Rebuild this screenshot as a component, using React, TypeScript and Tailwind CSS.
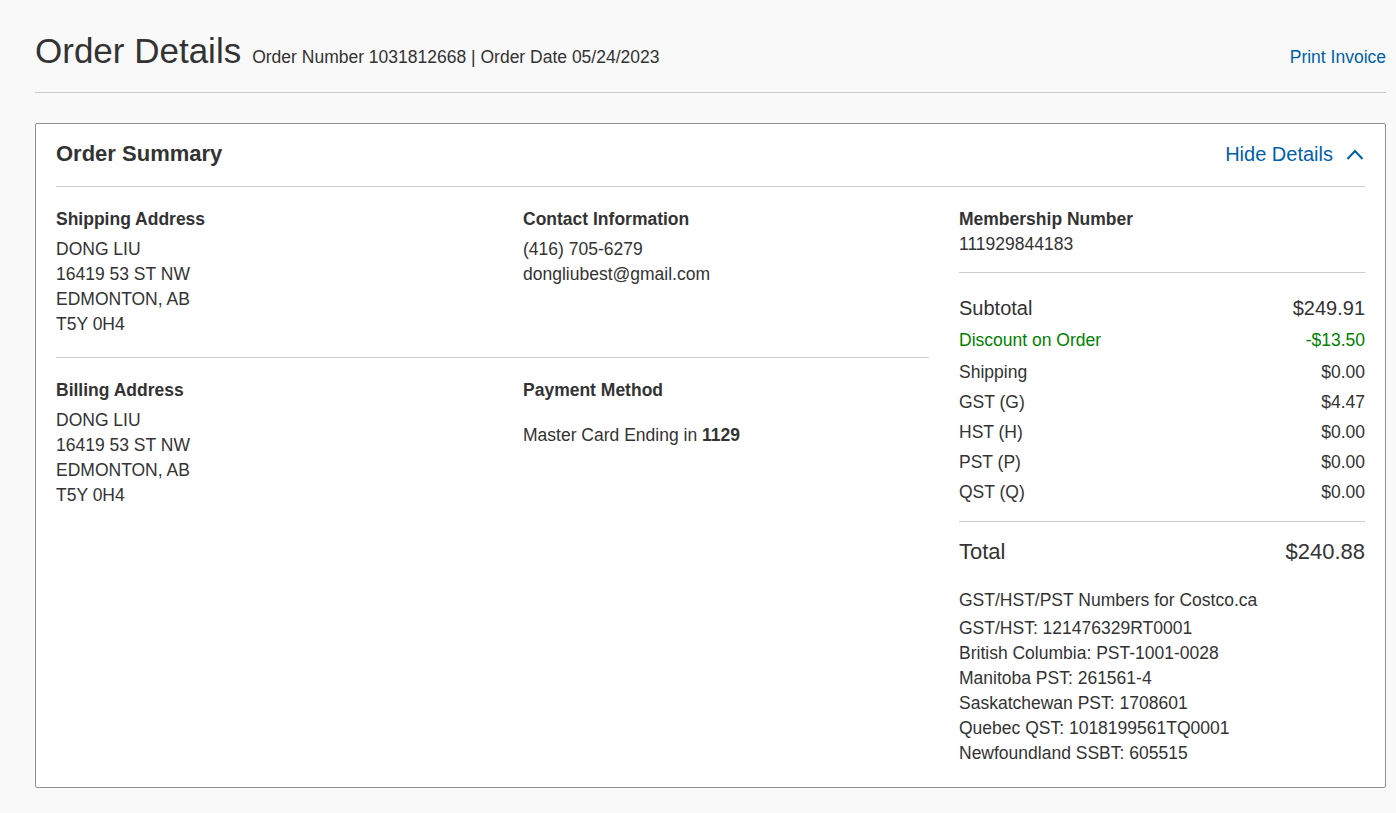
import React from "react";

const Row = ({ label, value, className = "" }: { label: React.ReactNode; value: React.ReactNode; className?: string }) => (
  <div className={`flex justify-between leading-[30px] ${className}`}>
    <span>{label}</span>
    <span>{value}</span>
  </div>
);

export default function App() {
  return (
    <div className="min-h-screen bg-[#f9f9f9] pl-[35px] pr-[10px] pb-[26px] font-['Liberation_Sans',Arial,sans-serif] text-[#333] text-[17.5px]">
      <div className="flex items-baseline justify-between border-b border-[#cccccc] pt-[31px] pb-[21px]">
        <div className="flex items-baseline gap-[11px]">
          <h1 className="text-[35px] leading-[40px] font-normal text-[#333]">Order Details</h1>
          <span className="text-[17.5px]">Order Number 1031812668 | Order Date 05/24/2023</span>
        </div>
        <a className="text-[17.5px] text-[#0060a9] cursor-pointer">Print Invoice</a>
      </div>

      <div className="mt-[30px] bg-white border border-[#909090] rounded-[2px] px-[20px] pb-[21px]">
        <div className="flex items-center justify-between border-b border-[#cccccc] pt-[15px] pb-[17px]">
          <h2 className="text-[22px] leading-[30px] font-bold">Order Summary</h2>
          <a className="flex items-center gap-[13px] text-[20px] leading-[30px] text-[#0060a9] cursor-pointer">
            Hide Details
            <svg width="18" height="14" viewBox="0 0 18 14" fill="none" className="mr-[1px]">
              <polyline points="1.5,12 9,4 16.5,12" stroke="#0060a9" strokeWidth="2" fill="none" />
            </svg>
          </a>
        </div>

        <div className="flex gap-[30px]">
          <div className="w-[873px] shrink-0">
            <div className="grid grid-cols-[467px_406px] border-b border-[#cccccc] pt-[20px] pb-[20px] leading-[25px]">
              <div>
                <div className="font-bold mb-[5px]">Shipping Address</div>
                <div>DONG LIU</div>
                <div>16419 53 ST NW</div>
                <div>EDMONTON, AB</div>
                <div>T5Y 0H4</div>
              </div>
              <div>
                <div className="font-bold mb-[5px]">Contact Information</div>
                <div>(416) 705-6279</div>
                <div>dongliubest@gmail.com</div>
              </div>
            </div>
            <div className="grid grid-cols-[467px_406px] pt-[20px] leading-[25px]">
              <div>
                <div className="font-bold mb-[5px]">Billing Address</div>
                <div>DONG LIU</div>
                <div>16419 53 ST NW</div>
                <div>EDMONTON, AB</div>
                <div>T5Y 0H4</div>
              </div>
              <div>
                <div className="font-bold mb-[20px]">Payment Method</div>
                <div>
                  Master Card Ending in <span className="font-bold">1129</span>
                </div>
              </div>
            </div>
          </div>

          <div className="flex-1 min-w-0">
            <div className="border-b border-[#cccccc] pt-[20px] pb-[15px] leading-[25px]">
              <div className="font-bold">Membership Number</div>
              <div>111929844183</div>
            </div>
            <div className="border-b border-[#cccccc] pt-[20px] pb-[14px]">
              <Row label="Subtotal" value="$249.91" className="text-[20px]" />
              <Row label="Discount on Order" value="-$13.50" className="mt-[2px] text-[#008000]" />
              <Row label="Shipping" value="$0.00" className="mt-[2px]" />
              <Row label="GST (G)" value="$4.47" />
              <Row label="HST (H)" value="$0.00" />
              <Row label="PST (P)" value="$0.00" />
              <Row label="QST (Q)" value="$0.00" />
            </div>
            <div className="pt-[15px]">
              <Row label="Total" value="$240.88" className="text-[22px]" />
              <div className="mt-[21px] leading-[25px] mb-[3px]">GST/HST/PST Numbers for Costco.ca</div>
              <div className="leading-[25px]">
                <div>GST/HST: 121476329RT0001</div>
                <div>British Columbia: PST-1001-0028</div>
                <div>Manitoba PST: 261561-4</div>
                <div>Saskatchewan PST: 1708601</div>
                <div>Quebec QST: 1018199561TQ0001</div>
                <div>Newfoundland SSBT: 605515</div>
              </div>
            </div>
          </div>
        </div>
      </div>
    </div>
  );
}
